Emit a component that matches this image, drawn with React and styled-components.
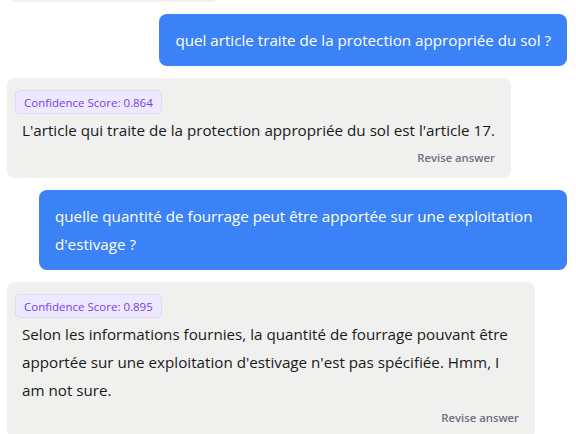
import React from "react";
import styled, { createGlobalStyle } from "styled-components";

const GlobalStyle = createGlobalStyle`
  html, body { margin: 0; padding: 0; background: #ffffff; }
  body { font-family: "Open Sans", "Noto Sans", sans-serif; }
`;

const ChatLog = styled.div`
  height: 434px;
  overflow: hidden;
  box-sizing: border-box;
  padding: 0 9px 0 7px;
  display: flex;
  flex-direction: column;
  gap: 12px;
`;

const Stub = styled.div`
  align-self: flex-start;
  margin-left: 1px;
  margin-top: -38px;
  width: 211px;
  height: 40px;
  flex-shrink: 0;
  border-radius: 8px;
  background: #f0f0ef;
`;

const UserBubble = styled.div`
  align-self: flex-end;
  max-width: 528px;
  box-sizing: border-box;
  padding: 12px 16px;
  border-radius: 8px;
  background: #3b82f6;
  color: #ffffff;
  font-size: 15.2px;
  line-height: 28px;
  flex-shrink: 0;
`;

const BotBubble = styled.div`
  align-self: flex-start;
  max-width: 528px;
  box-sizing: border-box;
  padding: 12px 16px 10px 8px;
  border-radius: 8px;
  background: #f0f0ef;
  color: #1a1a1a;
  display: flex;
  flex-direction: column;
  flex-shrink: 0;
`;

const Badge = styled.span`
  align-self: flex-start;
  box-sizing: border-box;
  height: 24px;
  display: inline-flex;
  align-items: center;
  padding: 0 8px;
  border: 1px solid #ddd6fe;
  border-radius: 5px;
  background: #ede9fe;
  color: #7c3aed;
  font-size: 11.5px;
  font-weight: 500;
`;

const AnswerText = styled.p`
  margin: 2px 0 0 7px;
  font-size: 15.2px;
  line-height: 28px;
`;

const ReviseButton = styled.button`
  align-self: flex-end;
  margin-top: 4px;
  padding: 0;
  border: none;
  background: none;
  color: #6b7280;
  font-family: "Open Sans", "Noto Sans", sans-serif;
  font-size: 11.3px;
  font-weight: 600;
  line-height: 20px;
  cursor: pointer;
`;

const messages = [
  { role: "user", text: "quel article traite de la protection appropriée du sol ?" },
  {
    role: "bot",
    score: "0.864",
    text: "L'article qui traite de la protection appropriée du sol est l'article 17.",
  },
  {
    role: "user",
    text: "quelle quantité de fourrage peut être apportée sur une exploitation d'estivage ?",
  },
  {
    role: "bot",
    score: "0.895",
    text:
      "Selon les informations fournies, la quantité de fourrage pouvant être apportée sur une exploitation d'estivage n'est pas spécifiée. Hmm, I am not sure.",
  },
];

export default function App() {
  return (
    <>
      <GlobalStyle />
      <ChatLog>
        <Stub />
        {messages.map((m, i) =>
          m.role === "user" ? (
            <UserBubble key={i}>{m.text}</UserBubble>
          ) : (
            <BotBubble key={i}>
              <Badge>Confidence Score: {m.score}</Badge>
              <AnswerText>{m.text}</AnswerText>
              <ReviseButton>Revise answer</ReviseButton>
            </BotBubble>
          )
        )}
      </ChatLog>
    </>
  );
}
